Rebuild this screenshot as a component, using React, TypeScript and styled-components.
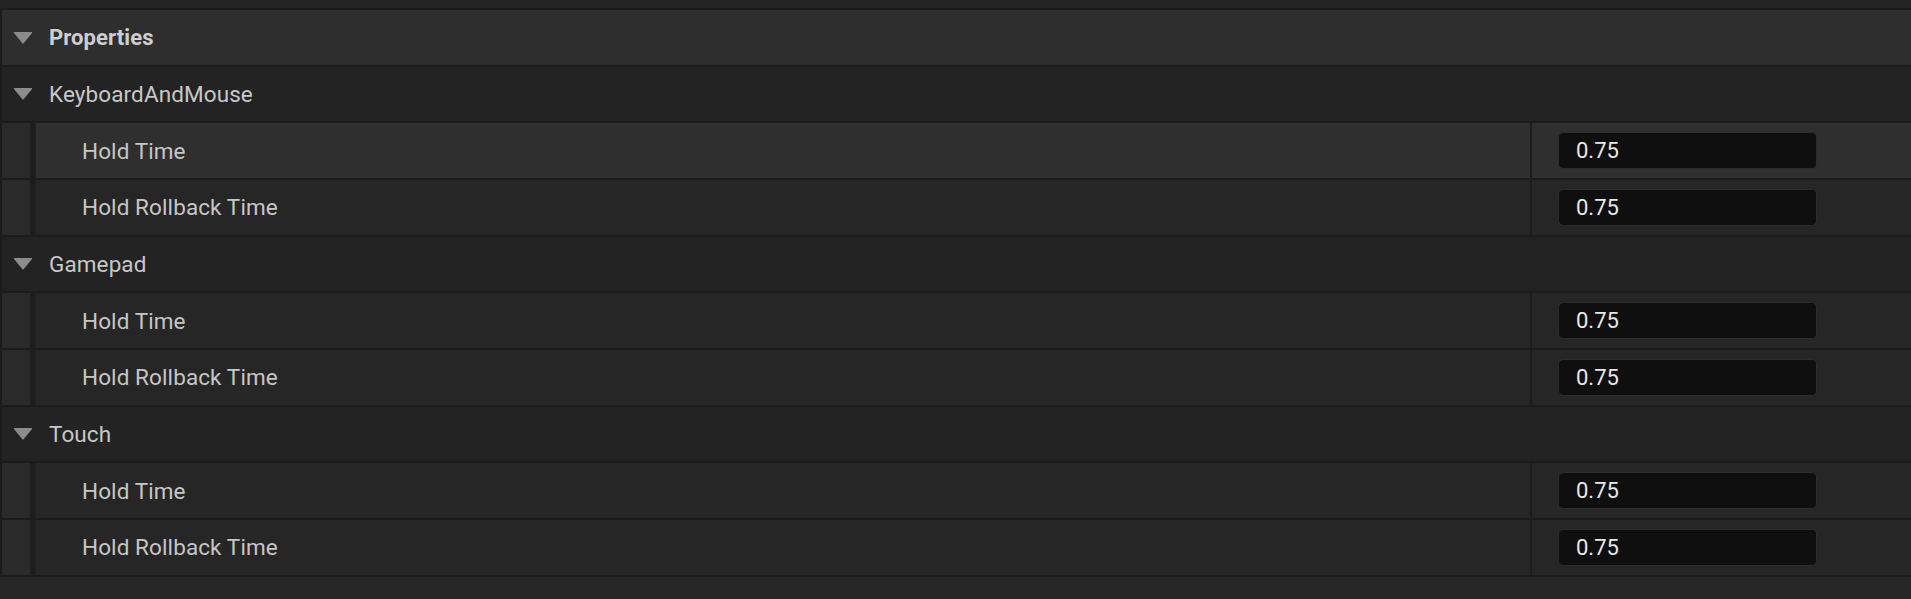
import React from "react";
import styled, { createGlobalStyle } from "styled-components";

const Global = createGlobalStyle`
  html, body { margin: 0; padding: 0; background: #1b1b1b; }
  body { font-family: Roboto, "Liberation Sans", sans-serif; overflow: hidden; }
`;

const Panel = styled.div`
  width: 1911px;
  height: 599px;
  display: flex;
  flex-direction: column;
  background: #1b1b1b;
`;

const TopStrip = styled.div`
  height: 8px;
  background: #242424;
  flex: none;
`;

const List = styled.div`
  display: flex;
  flex-direction: column;
  gap: 2px;
  padding: 2px 0 2px 2px;
`;

const Footer = styled.div`
  flex: 1;
  background: #262626;
`;

const HeaderRow = styled.div<{ $main?: boolean }>`
  height: 54.67px;
  display: flex;
  align-items: center;
  background: ${(p) => (p.$main ? "#2e2e2e" : "#232323")};
  padding-left: 11px;
  gap: 16px;
`;

const Arrow = styled.svg`
  width: 20px;
  height: 13px;
  flex: none;
`;

const HeaderLabel = styled.span<{ $main?: boolean }>`
  font-size: ${(p) => (p.$main ? "22px" : "22.5px")};
  font-weight: ${(p) => (p.$main ? 700 : 400)};
  color: ${(p) => (p.$main ? "#cfcfcf" : "#c8c8c8")};
  letter-spacing: 0.1px;
`;

const ChildRow = styled.div`
  height: 54.67px;
  display: flex;
`;

const Gutter = styled.div`
  width: 28px;
  background: #2a2a2a;
  flex: none;
`;

const GutterShadow = styled.div`
  width: 6px;
  background: linear-gradient(to right, #1f1f1f, #1c1c1c 60%, #222 100%);
  flex: none;
`;

const NameCell = styled.div<{ $hover?: boolean }>`
  flex: 1;
  display: flex;
  align-items: center;
  padding-left: 46px;
  background: ${(p) => (p.$hover ? "#2f2f2f" : "#262626")};
`;

const Divider = styled.div`
  width: 2px;
  background: #1d1d1d;
  flex: none;
`;

const ValueCell = styled.div<{ $hover?: boolean }>`
  width: 379px;
  flex: none;
  display: flex;
  align-items: center;
  padding-left: 26px;
  box-sizing: border-box;
  background: ${(p) => (p.$hover ? "#2f2f2f" : "#262626")};
`;

const Label = styled.span`
  font-size: 22.5px;
  color: #c6c6c6;
  letter-spacing: 0.1px;
`;

const Input = styled.div`
  width: 259px;
  height: 37px;
  box-sizing: border-box;
  background: #0f0f0f;
  border: 1px solid #2c2c2c;
  border-radius: 5px;
  display: flex;
  align-items: center;
  padding-left: 17px;
  font-size: 22px;
  color: #e8e8e8;
`;

const Triangle = () => (
  <Arrow viewBox="0 0 20 13">
    <path d="M1.5 1 L18.5 1 Q19.6 1 19 2 L10.8 12 Q10 13 9.2 12 L1 2 Q0.4 1 1.5 1 Z" fill="#8c8c8c" />
  </Arrow>
);

type Prop = { name: string; value: string; hover?: boolean };

const groups: { title: string; props: Prop[] }[] = [
  {
    title: "KeyboardAndMouse",
    props: [
      { name: "Hold Time", value: "0.75", hover: true },
      { name: "Hold Rollback Time", value: "0.75" },
    ],
  },
  {
    title: "Gamepad",
    props: [
      { name: "Hold Time", value: "0.75" },
      { name: "Hold Rollback Time", value: "0.75" },
    ],
  },
  {
    title: "Touch",
    props: [
      { name: "Hold Time", value: "0.75" },
      { name: "Hold Rollback Time", value: "0.75" },
    ],
  },
];

export default function App() {
  return (
    <>
      <Global />
      <Panel>
        <TopStrip />
        <List>
          <HeaderRow $main>
            <Triangle />
            <HeaderLabel $main>Properties</HeaderLabel>
          </HeaderRow>
          {groups.map((g) => (
            <React.Fragment key={g.title}>
              <HeaderRow>
                <Triangle />
                <HeaderLabel>{g.title}</HeaderLabel>
              </HeaderRow>
              {g.props.map((p, i) => (
                <ChildRow key={i}>
                  <Gutter />
                  <GutterShadow />
                  <NameCell $hover={p.hover}>
                    <Label>{p.name}</Label>
                  </NameCell>
                  <Divider />
                  <ValueCell $hover={p.hover}>
                    <Input>{p.value}</Input>
                  </ValueCell>
                </ChildRow>
              ))}
            </React.Fragment>
          ))}
        </List>
        <Footer />
      </Panel>
    </>
  );
}
